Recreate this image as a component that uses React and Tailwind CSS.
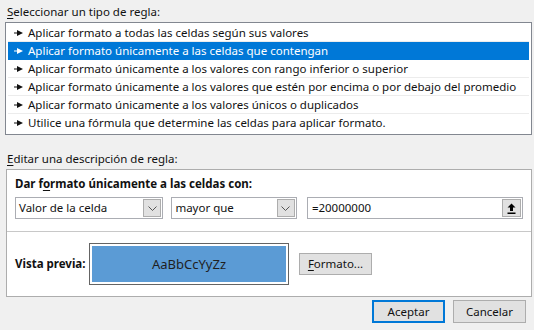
import React from "react";

const rules = [
  "Aplicar formato a todas las celdas según sus valores",
  "Aplicar formato únicamente a las celdas que contengan",
  "Aplicar formato únicamente a los valores con rango inferior o superior",
  "Aplicar formato únicamente a los valores que estén por encima o por debajo del promedio",
  "Aplicar formato únicamente a los valores únicos o duplicados",
  "Utilice una fórmula que determine las celdas para aplicar formato.",
];

const Bullet = () => (
  <svg width="9" height="6" viewBox="0 0 9 6" className="shrink-0">
    <rect x="0" y="2.5" width="4" height="1" fill="currentColor" />
    <path d="M3 0 L9 3 L3 6 Z" fill="currentColor" />
  </svg>
);

const Chevron = () => (
  <svg width="9" height="5" viewBox="0 0 9 5">
    <path d="M0.5 0.5 L4.5 4.5 L8.5 0.5" fill="none" stroke="#555" strokeWidth="1" />
  </svg>
);

const Combo = ({ value, width }) => (
  <div className={`h-[22px] ${width} border border-[#abadb3] bg-white flex items-center justify-between pl-[3px] pr-[1px]`}>
    <span>{value}</span>
    <div className="w-[18px] h-[18px] bg-[#e1e1e1] border border-[#adadad] flex items-center justify-center">
      <Chevron />
    </div>
  </div>
);

export default function App() {
  return (
    <div className="w-[534px] h-[330px] bg-[#f0f0f0] text-[11.5px] text-[#111] font-['Noto_Sans',sans-serif] leading-none overflow-hidden whitespace-nowrap">
      <div className="h-[22px] pl-[7px] pt-[6px]">
        <span className="underline underline-offset-2">S</span>eleccionar un tipo de regla:
      </div>

      {/* list of rule types */}
      <div className="ml-[5px] w-[527px] h-[113px] border border-[#828790] bg-white pt-[1px] px-[2px]">
        {rules.map((r, i) => (
          <div
            key={r}
            className={`h-[18px] flex items-center gap-[5px] pl-[6px] border-b ${
              i === 1 ? "bg-[#0078d7] text-white border-[#0078d7]" : "border-[#ececec]"
            } ${i === 5 ? "border-b-0" : ""}`}
          >
            <Bullet />
            <span>{r}</span>
          </div>
        ))}
      </div>

      <div className="h-[34px] pl-[7px] pt-[18px]">
        <span className="underline underline-offset-2">E</span>ditar una descripción de regla:
      </div>

      {/* rule description */}
      <div className="ml-[6px] w-[526px] h-[128px] border border-[#adadad] bg-white flex flex-col">
        <div className="h-[62px] border-b border-[#c8c8c8] px-[8px] pt-[8px]">
          <div className="font-bold h-[18px]">
            Dar f<span className="underline underline-offset-2">o</span>rmato únicamente a las celdas con:
          </div>
          <div className="flex gap-[8px] mt-[1px]">
            <Combo value="Valor de la celda" width="w-[149px]" />
            <Combo value="mayor que" width="w-[126px]" />
            <div className="h-[22px] w-[217px] ml-[2px] border border-[#abadb3] bg-white flex items-center justify-between pl-[4px] pr-[1px]">
              <span>=20000000</span>
              <div className="w-[19px] h-[18px] bg-[#e1e1e1] border border-[#adadad] flex items-center justify-center">
                <svg width="9" height="11" viewBox="0 0 9 11">
                  <path d="M4.5 0.5 L8.5 4.5 L6 4.5 L6 8 L3 8 L3 4.5 L0.5 4.5 Z" fill="#000" />
                  <rect x="0.5" y="9.5" width="8" height="1.5" fill="#000" />
                </svg>
              </div>
            </div>
          </div>
        </div>
        <div className="flex items-center flex-1 px-[8px]">
          <div className="font-bold w-[74px]">Vista previa:</div>
          <div className="w-[200px] h-[42px] border border-[#646464] bg-white p-[2px]">
            <div className="w-full h-full bg-[#5b9bd5] flex items-center justify-center text-[13px] text-[#1f1f1f]">
              AaBbCcYyZz
            </div>
          </div>
          <div className="ml-[10px] w-[73px] h-[22px] border border-[#adadad] bg-[#e1e1e1] flex items-center justify-center">
            <span className="underline underline-offset-2">F</span>ormato...
          </div>
        </div>
      </div>

      {/* dialog buttons */}
      <div className="flex justify-end gap-[8px] pr-[8px] pt-[3px]">
        <div className="w-[73px] h-[23px] border-2 border-[#0078d7] bg-[#e1e1e1] flex items-center justify-center">
          Aceptar
        </div>
        <div className="w-[73px] h-[23px] border border-[#adadad] bg-[#e1e1e1] flex items-center justify-center">
          Cancelar
        </div>
      </div>
    </div>
  );
}
